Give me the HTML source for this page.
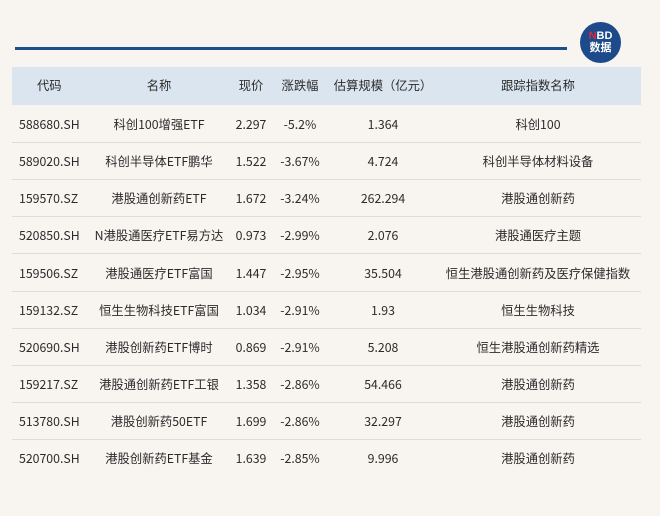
<!DOCTYPE html>
<html><head><meta charset="utf-8"><style>
body{margin:0;width:660px;height:516px;background:#f8f5f1;font-family:"Noto Sans CJK SC","Liberation Sans",sans-serif;color:#2b2b2b;position:relative;overflow:hidden;font-size:12.3px}
.line{position:absolute;left:15px;top:47px;width:552px;height:3px;background:#1f4e8c}
.logo{position:absolute;left:580px;top:22px;width:41px;height:41px;border-radius:50%;background:#1c4a8a;color:#fff;text-align:center;font-weight:bold;font-size:11px;line-height:12px;font-family:"Liberation Sans","Noto Sans CJK SC",sans-serif}
.logo .a{padding-top:8px}
.logo span{color:#e0283c}
.row{position:absolute;left:12px;width:629px;height:37px;border-bottom:1px solid #dcdcdc;box-sizing:border-box}
.row.h{background:#dae5f0;border-bottom:none;height:38px}
.row.last{border-bottom:none}
.row div{position:absolute;top:0;line-height:37px;white-space:nowrap;transform:translateX(-50%)}
.row div.c1{transform:none;left:7px}
.h div.c1{left:25px}
.c2{left:147px}.c3{left:239px}.c4{left:288px}.c5{left:371px}.c6{left:526px}
</style></head><body>
<div class="line"></div>
<div class="logo"><div class="a"><span>N</span>BD</div><div>数据</div></div>
<div class="row h" style="top:67px"><div class="c1">代码</div><div class="c2">名称</div><div class="c3">现价</div><div class="c4">涨跌幅</div><div class="c5">估算规模（亿元）</div><div class="c6">跟踪指数名称</div></div>
<div class="row" style="top:106px"><div class="c1">588680.SH</div><div class="c2">科创100增强ETF</div><div class="c3">2.297</div><div class="c4">-5.2%</div><div class="c5">1.364</div><div class="c6">科创100</div></div>
<div class="row" style="top:143px"><div class="c1">589020.SH</div><div class="c2">科创半导体ETF鹏华</div><div class="c3">1.522</div><div class="c4">-3.67%</div><div class="c5">4.724</div><div class="c6">科创半导体材料设备</div></div>
<div class="row" style="top:180px"><div class="c1">159570.SZ</div><div class="c2">港股通创新药ETF</div><div class="c3">1.672</div><div class="c4">-3.24%</div><div class="c5">262.294</div><div class="c6">港股通创新药</div></div>
<div class="row" style="top:217px"><div class="c1">520850.SH</div><div class="c2">N港股通医疗ETF易方达</div><div class="c3">0.973</div><div class="c4">-2.99%</div><div class="c5">2.076</div><div class="c6">港股通医疗主题</div></div>
<div class="row" style="top:255px"><div class="c1">159506.SZ</div><div class="c2">港股通医疗ETF富国</div><div class="c3">1.447</div><div class="c4">-2.95%</div><div class="c5">35.504</div><div class="c6">恒生港股通创新药及医疗保健指数</div></div>
<div class="row" style="top:292px"><div class="c1">159132.SZ</div><div class="c2">恒生生物科技ETF富国</div><div class="c3">1.034</div><div class="c4">-2.91%</div><div class="c5">1.93</div><div class="c6">恒生生物科技</div></div>
<div class="row" style="top:329px"><div class="c1">520690.SH</div><div class="c2">港股创新药ETF博时</div><div class="c3">0.869</div><div class="c4">-2.91%</div><div class="c5">5.208</div><div class="c6">恒生港股通创新药精选</div></div>
<div class="row" style="top:366px"><div class="c1">159217.SZ</div><div class="c2">港股通创新药ETF工银</div><div class="c3">1.358</div><div class="c4">-2.86%</div><div class="c5">54.466</div><div class="c6">港股通创新药</div></div>
<div class="row" style="top:403px"><div class="c1">513780.SH</div><div class="c2">港股创新药50ETF</div><div class="c3">1.699</div><div class="c4">-2.86%</div><div class="c5">32.297</div><div class="c6">港股通创新药</div></div>
<div class="row last" style="top:440px"><div class="c1">520700.SH</div><div class="c2">港股创新药ETF基金</div><div class="c3">1.639</div><div class="c4">-2.85%</div><div class="c5">9.996</div><div class="c6">港股通创新药</div></div>
</body></html>
